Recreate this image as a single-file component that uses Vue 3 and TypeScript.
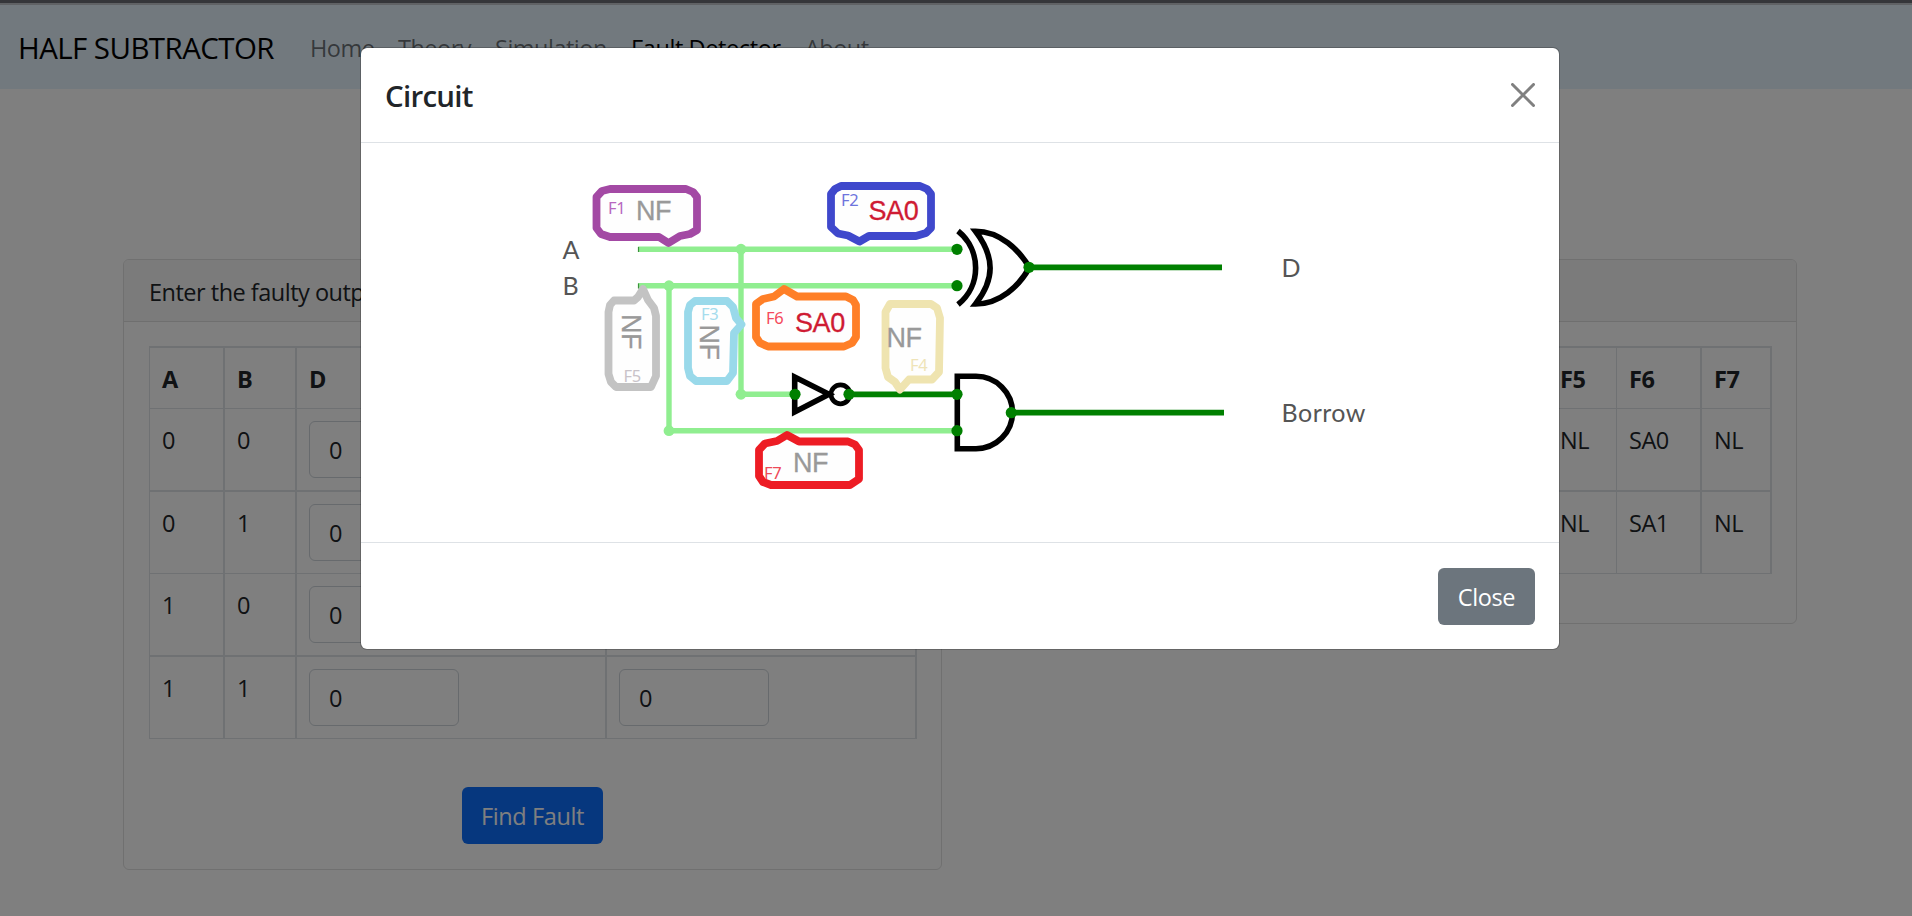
<script setup lang="ts">
interface TruthRow {
  a: number
  b: number
  d: string
  borrow: string
}

interface Callout {
  id: string
  color: string
  textColor: string
  points: string
  tag: [number, number]
  value: string
  at: [number, number]
  rotated?: boolean
}

const links = [
  { label: 'Home', cls: 'home' },
  { label: 'Theory', cls: 'theory' },
  { label: 'Simulation', cls: 'simulation' },
  { label: 'Fault Detector', cls: 'detector active' },
  { label: 'About', cls: 'about' },
]

const truthRows: TruthRow[] = [
  { a: 0, b: 0, d: '0', borrow: '0' },
  { a: 0, b: 1, d: '0', borrow: '0' },
  { a: 1, b: 0, d: '0', borrow: '0' },
  { a: 1, b: 1, d: '0', borrow: '0' },
]

const faultNames = ['F1', 'F2', 'F3', 'F4', 'F5', 'F6', 'F7']
const faultRows = [
  ['NL', 'SA0', 'NL', 'NL', 'NL', 'SA0', 'NL'],
  ['NL', 'SA0', 'NL', 'NL', 'NL', 'SA1', 'NL'],
]

const callouts: Callout[] = [
  { id: 'F1', color: '#a349a4', textColor: '#b768c0', points: '610,189 686,189 693,192 697,197 697,230 690,234 680,236 668.5,243 659,237 610,237 601,234 596.5,228 596.5,197 602,191', tag: [608, 213.5], value: 'NF', at: [636, 219.5] },
  { id: 'F2', color: '#3f48cc', textColor: '#6d74dd', points: '841,186 920,186 927,189 931,194 931,228 926,233 916,236 869,236 859.5,241.5 848,235.5 838,233.5 831,227 831,194 835,189', tag: [841, 206], value: 'SA0', at: [868.5, 219.5] },
  { id: 'F3', color: '#99d9ea', textColor: '#a5dced', points: '695,301 727,301 733,307 736,318 741.5,324.5 734,333 733,373 727,381 696,381 690,376 688,368 688,312 690,305', tag: [701, 319.5], value: 'NF', at: [699.5, 324.5], rotated: true },
  { id: 'F5', color: '#c3c3c3', textColor: '#c9c3c9', points: '614,300.5 634,300.5 638,297 643,289 648,300 654,308 656,316 656,376 651,387 616,387 611,382 608.5,374 608.5,312 610,305', tag: [623.5, 381.5], value: 'NF', at: [621.5, 314], rotated: true },
  { id: 'F6', color: '#ff7f27', textColor: '#f5495c', points: '756,304 763,299 774,296.5 784,289 797,296.5 846,296.5 853,300 856,305 856,337 852,343 844,346.5 768,346.5 760,343 756,337', tag: [766, 324], value: 'SA0', at: [795, 332] },
  { id: 'F4', color: '#efe4b0', textColor: '#efe4b8', points: '890,304 931,304 937,308 940,318 939,372 932,379.5 909,379.5 900,389.5 895,382 888,377 885.5,368 885.5,312', tag: [910, 371], value: 'NF', at: [886.5, 347] },
  { id: 'F7', color: '#ed1c24', textColor: '#ee4a58', points: '759,450 765,443.5 777,441 787,435 799,441.5 848,441.5 855,444.5 859,450 859,479 850,485 771,485 763,482 759,476', tag: [764, 478.5], value: 'NF', at: [793, 471.5] },
]
</script>

<template>
  <div class="page">
    <div class="chrome-edge"></div>
    <nav class="navbar">
      <a class="brand"><span class="brand-text">HALF SUBTRACTOR</span></a>
      <a v-for="l in links" :key="l.label" class="nav-link" :class="l.cls">{{ l.label }}</a>
    </nav>

    <main class="content">
      <section class="card inputs">
        <header class="card-header">Enter the faulty outputs</header>
        <table class="grid">
          <thead>
            <tr>
              <th class="c-a">A</th>
              <th class="c-b">B</th>
              <th class="c-w">D</th>
              <th class="c-w">Borrow</th>
            </tr>
          </thead>
          <tbody>
            <tr v-for="(r, i) in truthRows" :key="i">
              <td>{{ r.a }}</td>
              <td>{{ r.b }}</td>
              <td><div class="field">{{ r.d }}</div></td>
              <td><div class="field">{{ r.borrow }}</div></td>
            </tr>
          </tbody>
        </table>
        <button class="btn primary">Find Fault</button>
      </section>

      <section class="card result">
        <header class="card-header">Possible faults</header>
        <table class="grid faults">
          <thead>
            <tr>
              <th v-for="n in faultNames" :key="n" :class="n.toLowerCase()">{{ n }}</th>
            </tr>
          </thead>
          <tbody>
            <tr v-for="(row, i) in faultRows" :key="i">
              <td v-for="(v, j) in row" :key="j" :class="faultNames[j].toLowerCase()">{{ v }}</td>
            </tr>
          </tbody>
        </table>
      </section>
    </main>

    <div class="backdrop">
      <div class="modal">
        <header class="modal-header">
          <h5 class="modal-title">Circuit</h5>
          <svg class="close-icon" viewBox="0 0 16 16" width="24" height="24">
            <path d="M1 1L15 15M15 1L1 15" fill="none" stroke="#808080" stroke-width="2" stroke-linecap="round" />
          </svg>
        </header>
        <svg class="circuit" viewBox="361 143 1198 399" width="1198" height="399">
          <g fill="none" stroke="#90ee90" stroke-width="5.4">
            <path d="M638 249.2H957M638 285.7H957M741 249.2V394.3H795M669 285.7V430.7H957" />
          </g>
          <g fill="#90ee90">
            <circle cx="741" cy="249.2" r="5.4" />
            <circle cx="669" cy="285.7" r="5.4" />
            <circle cx="741" cy="394.3" r="5.4" />
            <circle cx="669" cy="430.7" r="5.4" />
          </g>
          <path d="M638.5 247V252M638.5 283.5V288.5" stroke="#3d8f3d" stroke-width="1.2" />
          <g fill="none" stroke="#000" stroke-width="5.6">
            <path d="M958 231C981.5 250 981.5 286 958 304.5" />
            <path d="M975.5 231.3C1000 231.3 1019 250 1029.5 267.5C1019 286 1000 304 975.5 304C995 279 995 257 975.5 231.3Z" />
            <path d="M957.3 376.3H976A36.5 36.2 0 0 1 976 448.7H957.3Z" />
            <path d="M794.7 377V412L829 394.3Z" />
            <circle cx="840.5" cy="394.3" r="9.5" stroke-width="4.7" />
          </g>
          <path d="M1029 267.3H1222M1011 412.7H1224M849 394.3H957" stroke="#008000" stroke-width="5.8" fill="none" />
          <g fill="#008000">
            <circle cx="957" cy="249.3" r="5.6" />
            <circle cx="957" cy="285.7" r="5.6" />
            <circle cx="957" cy="394.3" r="5.6" />
            <circle cx="957" cy="430.7" r="5.6" />
            <circle cx="795" cy="394.3" r="5.6" />
            <circle cx="849" cy="394.3" r="5.6" />
            <circle cx="1029" cy="267.3" r="5.6" />
            <circle cx="1011.3" cy="412.7" r="5.6" />
          </g>
          <g v-for="c in callouts" :key="c.id">
            <polygon :points="c.points" fill="#fefefe" :stroke="c.color" stroke-width="7.8" stroke-linejoin="round" />
            <text class="tag" :x="c.tag[0]" :y="c.tag[1]" :fill="c.textColor">{{ c.id }}</text>
            <text
              class="value"
              :class="{ stuck: c.value !== 'NF' }"
              :transform="`translate(${c.at[0]} ${c.at[1]})` + (c.rotated ? ' rotate(90)' : '')"
            >{{ c.value }}</text>
          </g>
          <g class="pin">
            <text x="562.5" y="259">A</text>
            <text x="562.5" y="295">B</text>
            <text x="1281.5" y="277">D</text>
            <text x="1281.5" y="421.7" textLength="84">Borrow</text>
          </g>
        </svg>
        <footer class="modal-footer">
          <button class="btn secondary">Close</button>
        </footer>
      </div>
    </div>
  </div>
</template>

<style>
html,
body {
  margin: 0;
  overflow: hidden;
  background: #fff;
}
</style>

<style scoped>
.page {
  position: relative;
  width: 1912px;
  height: 916px;
  overflow: hidden;
  background: #fff;
  color: #212529;
  font-family: 'Open Sans', 'Noto Sans', sans-serif;
  font-size: 23.5px;
  line-height: 36px;
  letter-spacing: -0.5px;
}
.page * {
  box-sizing: border-box;
}
.chrome-edge {
  position: relative;
  z-index: 3;
  height: 5px;
  background: #35363a;
  border-bottom: 2px solid #606265;
}
.navbar {
  display: flex;
  align-items: center;
  height: 84px;
  padding: 2px 18px 0;
  background: #e4f2fc;
  white-space: nowrap;
}
.brand {
  width: 292px;
  color: #000;
  font-size: 29.5px;
  letter-spacing: -0.57px;
}
.nav-link {
  color: rgba(0, 0, 0, 0.55);
}
.nav-link.active {
  color: #000;
}
.home {
  width: 88px;
}
.theory {
  width: 97px;
}
.simulation {
  width: 136px;
}
.detector {
  width: 174px;
  letter-spacing: -0.4px;
}
.content {
  display: flex;
  align-items: flex-start;
  gap: 36px;
  padding: 170px 0 0 123px;
}
.card {
  width: 819px;
  border: 1px solid #e0e0e0;
  border-radius: 6px;
}
.inputs {
  height: 611px;
  display: flex;
  flex-direction: column;
}
.result {
  height: 365px;
}
.card-header {
  height: 62px;
  padding: 14px 25px 0;
  background: #f7f7f7;
  border-bottom: 1px solid #dfdfdf;
  border-radius: 5px 5px 0 0;
}
.grid {
  width: 768px;
  margin: 24px 0 0 25px;
  table-layout: fixed;
  border-spacing: 0;
  border-top: 2px solid #dee2e6;
  border-left: 1px solid #dee2e6;
}
.grid th,
.grid td {
  height: 82px;
  padding: 12px 12px 0;
  border-right: 2px solid #dee2e6;
  border-bottom: 1px solid #dee2e6;
  text-align: left;
  vertical-align: top;
}
.grid td {
  line-height: 38px;
}
.grid th {
  height: 61px;
  padding-top: 13px;
  font-weight: 700;
}
.grid tbody tr:nth-child(odd) td {
  height: 83px;
  border-bottom-width: 2px;
}
.c-a {
  width: 75px;
}
.c-b {
  width: 72px;
}
.c-w {
  width: 310px;
}
.faults .f5 {
  width: 69px;
  border-right-width: 1px;
}
.faults .f6 {
  width: 85px;
}
.faults .f7 {
  width: 70px;
}
.field {
  width: 150px;
  height: 57px;
  padding: 9px 19px;
  border: 1px solid #ced4da;
  border-radius: 6px;
  line-height: 38px;
}
.btn {
  height: 57px;
  padding: 1px 0 0;
  border: 0;
  border-radius: 6px;
  color: #fff;
  font: inherit;
  letter-spacing: -0.4px;
}
.primary {
  width: 141px;
  margin: 48px 0 0 338px;
  background: #0d6efd;
}
.secondary {
  width: 97px;
  background: #6c757d;
}
.backdrop {
  position: absolute;
  inset: 0;
  z-index: 2;
  display: flex;
  justify-content: center;
  align-items: flex-start;
  padding-top: 47px;
  padding-left: 8px;
  background: rgba(0, 0, 0, 0.5);
}
.modal {
  width: 1200px;
  height: 603px;
  background: #fff;
  background-clip: padding-box;
  border: 1px solid rgba(0, 0, 0, 0.2);
  border-radius: 7px;
}
.modal-header {
  display: flex;
  justify-content: space-between;
  align-items: center;
  height: 95px;
  padding: 0 24px;
  border-bottom: 1px solid #dee2e6;
}
.modal-title {
  margin: 1px 0 0;
  font-size: 29.5px;
  font-weight: 600;
  letter-spacing: -0.75px;
}
.close-icon {
  margin-bottom: 1px;
}
.circuit {
  display: block;
}
.modal-footer {
  display: flex;
  justify-content: flex-end;
  height: 107px;
  padding: 25px 24px 0;
  border-top: 1px solid #dee2e6;
}
.tag {
  font-family: 'Noto Sans', sans-serif;
  font-size: 16.5px;
  line-height: 16px;
  letter-spacing: -0.4px;
}
.value {
  font-family: 'Liberation Sans', Arial, sans-serif;
  font-size: 27px;
  line-height: 27px;
  letter-spacing: -0.4px;
  fill: #999;
  stroke: #999;
  stroke-width: 0.3px;
}
.value.stuck {
  fill: #cf1b33;
  stroke: #cf1b33;
}
.pin {
  font-family: Lato, sans-serif;
  font-size: 25px;
  letter-spacing: 0;
  fill: #555;
}
</style>
